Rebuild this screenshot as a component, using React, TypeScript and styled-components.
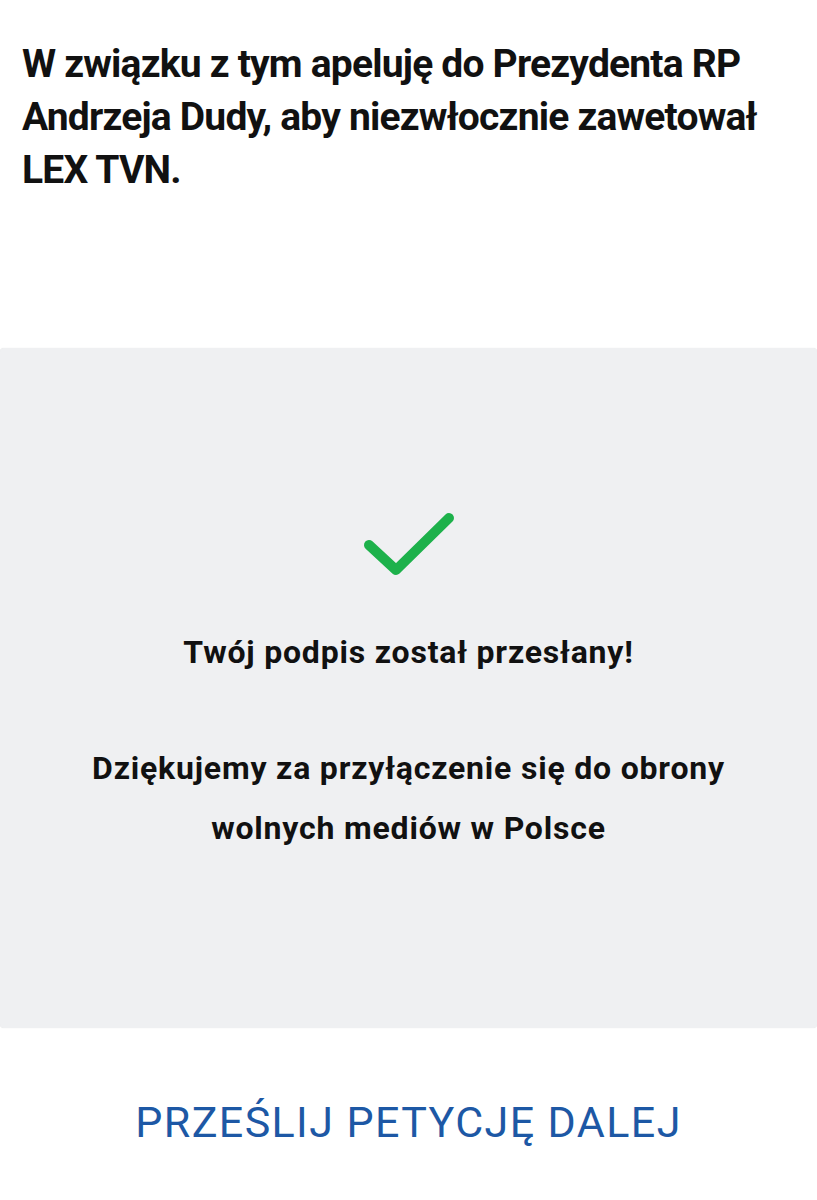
import styled, { createGlobalStyle } from 'styled-components'

const GlobalStyle = createGlobalStyle`
  html, body {
    margin: 0;
    padding: 0;
    background: #ffffff;
  }

  body {
    font-family: Roboto, 'Noto Sans', sans-serif;
    color: #111111;
  }
`

const Page = styled.main`
  display: flex;
  flex-direction: column;
  width: 817px;
`

const Appeal = styled.h2`
  margin: 0;
  padding: 38px 22px 0 22px;
  font-size: 39px;
  line-height: 53px;
  font-weight: 700;
  letter-spacing: -0.8px;
  white-space: nowrap;
  color: #111111;
`

const ThankYouCard = styled.section`
  margin-top: 151px;
  height: 680px;
  background: #eff0f2;
  border-radius: 4px;
  box-shadow: 0 0 1px rgba(0, 0, 0, 0.12);
  display: flex;
  flex-direction: column;
  align-items: center;
  padding-top: 149px;
  box-sizing: border-box;
`

const CheckIcon = styled.svg`
  width: 96px;
  height: 80px;
  display: block;
`

const CardTitle = styled.h3`
  margin: 55px 0 0 0;
  font-size: 32px;
  line-height: 40px;
  font-weight: 700;
  letter-spacing: 0.8px;
  text-align: center;
`

const CardText = styled.p`
  margin: 66px 0 0 0;
  font-size: 32px;
  line-height: 60px;
  font-weight: 700;
  letter-spacing: 0.8px;
  text-align: center;
`

const ShareLink = styled.a`
  display: block;
  margin-top: 64px;
  text-align: center;
  font-size: 43px;
  line-height: 60px;
  font-weight: 400;
  letter-spacing: 1.4px;
  color: #1d58a5;
  text-decoration: none;
  cursor: pointer;
`

export default function App() {
  return (
    <>
      <GlobalStyle />
      <Page>
        <Appeal>
          W związku z tym apeluję do Prezydenta RP
          <br />
          Andrzeja Dudy, aby niezwłocznie zawetował
          <br />
          LEX TVN.
        </Appeal>

        <ThankYouCard>
          <CheckIcon viewBox="0 0 96 80">
            <polyline
              points="8,48 35,73 88,21"
              fill="none"
              stroke="#1db14b"
              strokeWidth="10"
              strokeLinecap="round"
              strokeLinejoin="round"
            />
          </CheckIcon>
          <CardTitle>Twój podpis został przesłany!</CardTitle>
          <CardText>
            Dziękujemy za przyłączenie się do obrony
            <br />
            wolnych mediów w Polsce
          </CardText>
        </ThankYouCard>

        <ShareLink>PRZEŚLIJ PETYCJĘ DALEJ</ShareLink>
      </Page>
    </>
  )
}
